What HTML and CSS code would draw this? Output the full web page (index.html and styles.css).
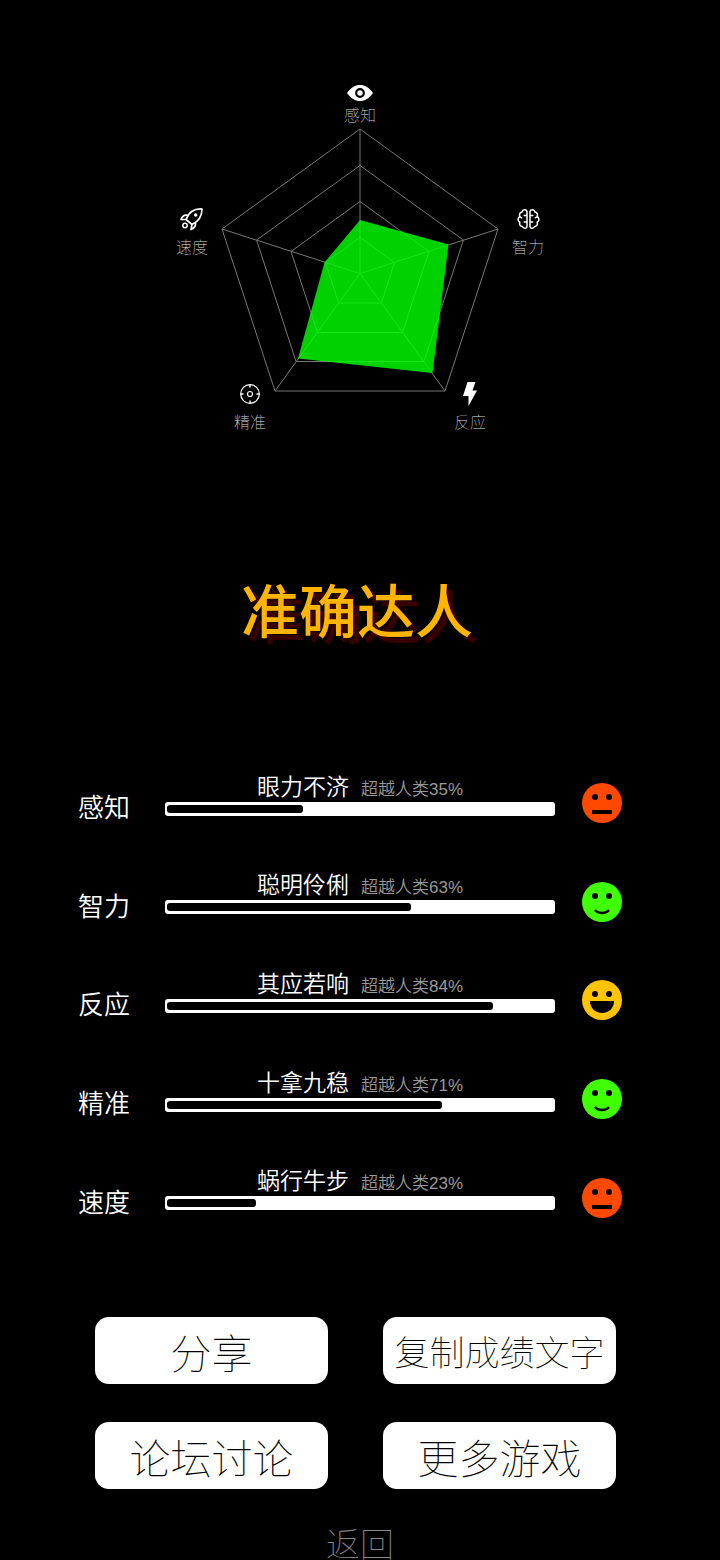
FILE: index.html
```html
<!DOCTYPE html>
<html lang="zh-CN">
<head>
<meta charset="utf-8">
<meta name="viewport" content="width=device-width, initial-scale=1">
<title>准确达人</title>
<link rel="stylesheet" href="styles.css">
</head>
<body>
<main class="page">
  <svg class="radar" viewBox="0 0 720 360" role="img" aria-label="能力雷达图">
    <g class="grid-lines">
      <path d="M360 49L498 149L445 311H275L222 149Z"/>
      <path d="M360 85.500L463.400 160L424 281.500H296L256.600 160Z"/>
      <path d="M360 121.500L429 171.500L402.500 252.500H317.500L291 171.500Z"/>
      <path d="M360 157.500L394.500 182.500L381.500 223H338.500L325.500 182.500Z"/>
      <path d="M360 193.500V49M360 193.500L498 149M360 193.500L445 311M360 193.500L275 311M360 193.500L222 149"/>
    </g>
    <polygon class="area" points="360,140 448.500,164.500 432.500,293 298,278.500 324.500,182.500"/>

    <g class="axis-icon" transform="translate(360 13)">
      <path class="solid" d="M-13 0C-9-5.500-5-8 0-8S9-5.500 13 0C9 5.500 5 8 0 8S-9 5.500-13 0Z"/>
      <circle r="3.800" fill="#fff" stroke="#000" stroke-width="2.200"/>
    </g>
    <g class="axis-icon" transform="translate(528.500 139)">
      <path d="M-1.500-7.500C-2-9.800-6-9.800-6.500-7C-9-6.500-9.500-4-8.600-2.500C-11-1-11 2-8.700 3.200C-9.500 6-8 7.500-6.200 7.500C-5 10-1.500 9.500-1.500 7.500ZM-1.800-3.500H-4.200M-8.600-2.200L-6.800-1.200M-1.800 3H-4.200"/>
      <path d="M1.500-7.500C2-9.800 6-9.800 6.500-7C9-6.500 9.500-4 8.600-2.500C11-1 11 2 8.700 3.200C9.500 6 8 7.500 6.200 7.500C5 10 1.500 9.500 1.500 7.500ZM1.800-3.500H4.200M8.600-2.200L6.800-1.200M1.800 3H4.200"/>
    </g>
    <g transform="translate(470 314)">
      <path class="solid" d="M-2.500-12H5.500L2.500-3.500H7L-1.500 12V2H-7Z"/>
    </g>
    <g class="axis-icon" transform="translate(250 314)">
      <circle r="9.300" stroke-width="1.200"/>
      <circle r="2.500" stroke-width="1.200"/>
      <path d="M0-9V-7M0 9V7M-9 0H-7M9 0H7" stroke-width="1.400"/>
    </g>
    <g class="axis-icon" transform="translate(191.500 139)">
      <path stroke-width="1.700" d="M-5.500 0.500C-3-6 2-10.500 10.500-10C10.500-2.500 7 2.500 0.500 5.500ZM-3.500-3.500C-7-4.500-9.500-2-10.500 0.500L-5.500 0.500M4 3.500C4.500 7 2 9.500-0.500 10.500L0.500 5.500"/>
      <circle class="solid" cx="4.200" cy="-4" r="1.700"/>
      <circle cx="-6.500" cy="6.500" r="2.200"/>
    </g>

    <g class="axis-name">
      <text x="360" y="41">感知</text>
      <text x="528" y="173">智力</text>
      <text x="470" y="348">反应</text>
      <text x="250" y="348">精准</text>
      <text x="192" y="173">速度</text>
    </g>
  </svg>

  <h1 class="rank">准确达人</h1>

  <svg class="symbols" aria-hidden="true">
    <symbol id="face-flat" viewBox="0 0 40 40">
      <circle cx="20" cy="20" r="20" fill="#ff4800"/>
      <circle cx="13" cy="14" r="3"/><circle cx="27" cy="14" r="3"/>
      <rect x="10" y="27" width="20" height="4" rx="1"/>
    </symbol>
    <symbol id="face-smile" viewBox="0 0 40 40">
      <circle cx="20" cy="20" r="20" fill="#40ff00"/>
      <circle cx="13" cy="14" r="3"/><circle cx="27" cy="14" r="3"/>
      <path d="M13 28C16 32 24 32 27 28" fill="none" stroke="#000" stroke-width="2.400"/>
    </symbol>
    <symbol id="face-laugh" viewBox="0 0 40 40">
      <circle cx="20" cy="20" r="20" fill="#ffc400"/>
      <circle cx="13" cy="14" r="3"/><circle cx="27" cy="14" r="3"/>
      <path d="M8 21H32C32 28 27 33 20 33S8 28 8 21Z"/>
    </symbol>
  </svg>

  <ul class="scores">
    <li class="score">
      <span class="score-label">感知</span>
      <div class="score-body">
        <p class="score-text"><span class="score-title">眼力不济</span><span class="score-note">超越人类35%</span></p>
        <div class="bar" role="meter" aria-label="感知" aria-valuenow="35" aria-valuemin="0" aria-valuemax="100"><div class="bar-fill" style="width:35%"></div></div>
      </div>
      <svg class="face"><use href="#face-flat"/></svg>
    </li>
    <li class="score">
      <span class="score-label">智力</span>
      <div class="score-body">
        <p class="score-text"><span class="score-title">聪明伶俐</span><span class="score-note">超越人类63%</span></p>
        <div class="bar" role="meter" aria-label="智力" aria-valuenow="63" aria-valuemin="0" aria-valuemax="100"><div class="bar-fill" style="width:63%"></div></div>
      </div>
      <svg class="face"><use href="#face-smile"/></svg>
    </li>
    <li class="score">
      <span class="score-label">反应</span>
      <div class="score-body">
        <p class="score-text"><span class="score-title">其应若响</span><span class="score-note">超越人类84%</span></p>
        <div class="bar" role="meter" aria-label="反应" aria-valuenow="84" aria-valuemin="0" aria-valuemax="100"><div class="bar-fill" style="width:84%"></div></div>
      </div>
      <svg class="face"><use href="#face-laugh"/></svg>
    </li>
    <li class="score">
      <span class="score-label">精准</span>
      <div class="score-body">
        <p class="score-text"><span class="score-title">十拿九稳</span><span class="score-note">超越人类71%</span></p>
        <div class="bar" role="meter" aria-label="精准" aria-valuenow="71" aria-valuemin="0" aria-valuemax="100"><div class="bar-fill" style="width:71%"></div></div>
      </div>
      <svg class="face"><use href="#face-smile"/></svg>
    </li>
    <li class="score">
      <span class="score-label">速度</span>
      <div class="score-body">
        <p class="score-text"><span class="score-title">蜗行牛步</span><span class="score-note">超越人类23%</span></p>
        <div class="bar" role="meter" aria-label="速度" aria-valuenow="23" aria-valuemin="0" aria-valuemax="100"><div class="bar-fill" style="width:23%"></div></div>
      </div>
      <svg class="face"><use href="#face-flat"/></svg>
    </li>
  </ul>

  <div class="actions">
    <button class="action" type="button">分享</button>
    <button class="action action-long" type="button">复制成绩文字</button>
    <button class="action" type="button">论坛讨论</button>
    <button class="action" type="button">更多游戏</button>
  </div>

  <button class="back" type="button">返回</button>
</main>
</body>
</html>
```
FILE: styles.css
```css
* {
  box-sizing: border-box;
}

body {
  margin: 0;
  background: #000;
  color: #fff;
  font-family: "Liberation Sans", "Noto Sans CJK SC", sans-serif;
}

.page {
  display: flex;
  flex-direction: column;
  padding-top: 80px;
}

.radar {
  display: block;
  width: 100%;
  height: auto;
}

.grid-lines {
  fill: none;
  stroke: #777;
  stroke-width: 1;
}

.area {
  fill: #0f0;
  fill-opacity: 0.82;
}

.axis-icon {
  fill: none;
  stroke: #fff;
  stroke-width: 1.5;
  stroke-linejoin: round;
  stroke-linecap: round;
}

.solid {
  fill: #fff;
  stroke: none;
}

.axis-name {
  fill: #ddd;
  font-family: "Noto Sans CJK SC", sans-serif;
  font-size: 16px;
  font-weight: 100;
  text-anchor: middle;
}

.rank {
  margin: 133px 0 0;
  padding-right: 6px;
  color: #ffb400;
  font-size: 58px;
  font-weight: 500;
  line-height: 80px;
  text-align: center;
  text-shadow: 6px 6px 1px #380000;
}

.symbols {
  position: absolute;
  width: 0;
  height: 0;
}

.scores {
  display: grid;
  grid-auto-rows: 1fr;
  min-height: 493px;
  margin: 101px 0 0;
  padding: 0 98px 0 78px;
  list-style: none;
}

.score {
  display: grid;
  grid-template-columns: 60px 1fr 40px;
  column-gap: 27px;
  align-items: center;
}

.score-label {
  padding-top: 6px;
  font-family: "Noto Sans CJK SC", sans-serif;
  font-size: 26px;
  line-height: 36px;
  font-weight: 350;
}

.score-body {
  padding-bottom: 16px;
}

.score-text {
  display: flex;
  justify-content: center;
  align-items: baseline;
  gap: 12px;
  margin: 0;
  line-height: 24px;
  white-space: nowrap;
}

.score-title {
  font-size: 23px;
}

.score-note {
  color: #999;
  font-size: 17px;
}

.score-title,
.score-note {
  font-weight: 350;
}

.bar {
  height: 14px;
  padding: 3px 0 3px 2px;
  border-radius: 3px;
  background: #fff;
}

.bar-fill {
  height: 8px;
  border-radius: 3px;
  background: #000;
}

.face {
  display: block;
  width: 40px;
  height: 40px;
}

.actions {
  display: grid;
  grid-template-columns: 1fr 1fr;
  gap: 38px 55px;
  margin-top: 70px;
  padding: 0 104px 0 95px;
}

.action,
.back {
  padding: 0;
  border: 0;
  font-family: "Noto Sans CJK SC", sans-serif;
  font-weight: 100;
  white-space: nowrap;
  cursor: pointer;
}

.action {
  height: 67px;
  border-radius: 14px;
  background: #fff;
  color: #000;
  font-size: 41px;
  line-height: 60px;
}

.action-long {
  font-size: 35px;
}

.back {
  align-self: center;
  margin-top: 36px;
  background: none;
  color: #888;
  font-size: 34px;
  line-height: 35px;
}
```
